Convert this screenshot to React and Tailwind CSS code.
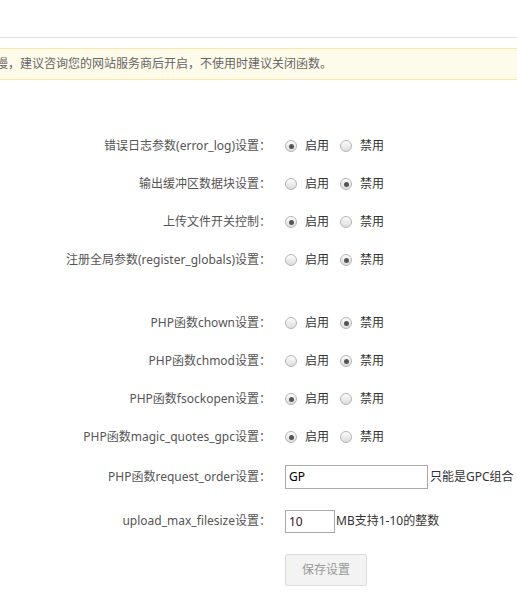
import React, { useState } from "react";

const font = { fontFamily: '"Noto Sans", "Noto Sans CJK SC", sans-serif' };

const radioRows = [
  { label: "错误日志参数(error_log)设置：", value: "on" },
  { label: "输出缓冲区数据块设置：", value: "off" },
  { label: "上传文件开关控制：", value: "on" },
  { label: "注册全局参数(register_globals)设置：", value: "off" },
];

const phpRows = [
  { label: "PHP函数chown设置：", value: "off" },
  { label: "PHP函数chmod设置：", value: "off" },
  { label: "PHP函数fsockopen设置：", value: "on" },
  { label: "PHP函数magic_quotes_gpc设置：", value: "on" },
];

function Radio({ checked, onClick, text }) {
  return (
    <label className="flex items-center cursor-pointer" onClick={onClick}>
      <span className="flex items-center justify-center w-[12px] h-[12px] rounded-full border border-[#b5b5b5] bg-gradient-to-b from-[#fdfdfd] to-[#dcdcdc]">
        {checked && <span className="w-[5px] h-[5px] rounded-full bg-[#555]" />}
      </span>
      <span className="ml-[8px] text-[12px] text-[#333]">{text}</span>
    </label>
  );
}

function Row({ label, children, className = "h-[38px]" }) {
  return (
    <div className={`flex items-center ${className}`}>
      <div className="w-[271px] shrink-0 text-right text-[12px] text-[#555] whitespace-nowrap">{label}</div>
      <div className="pl-[14px] flex items-center">{children}</div>
    </div>
  );
}

function RadioRow({ row }) {
  const [v, setV] = useState(row.value);
  return (
    <Row label={row.label}>
      <Radio checked={v === "on"} onClick={() => setV("on")} text="启用" />
      <div className="w-[11px]" />
      <Radio checked={v === "off"} onClick={() => setV("off")} text="禁用" />
    </Row>
  );
}

export default function App() {
  const [order, setOrder] = useState("GP");
  const [size, setSize] = useState("10");

  return (
    <div className="w-[517px] h-[608px] overflow-hidden bg-white" style={font}>
      <div className="h-[38px] border-b border-[#e3e3e3]" />
      <div className="mt-[10px] h-[32px] flex items-center bg-[#fffbea] border-y border-[#fde5a8] overflow-hidden">
        <div className="ml-[-328px] whitespace-nowrap text-[12px] text-[#666]">
          提示：部分函数开启后可能会造成网站安全隐患或访问速度变慢，建议咨询您的网站服务商后开启，不使用时建议关闭函数。
        </div>
      </div>

      <div className="mt-[47px]">
        {radioRows.map((r) => (
          <RadioRow key={r.label} row={r} />
        ))}
        <div className="h-[25px]" />
        {phpRows.map((r) => (
          <RadioRow key={r.label} row={r} />
        ))}
        <Row label="PHP函数request_order设置：" className="h-[41px]">
          <input
            className="w-[143px] h-[24px] border border-[#a9a9a9] px-[3px] text-[12px] text-[#000] outline-none"
            value={order}
            onChange={(e) => setOrder(e.target.value)}
          />
          <span className="ml-[2px] text-[12px] text-[#333] whitespace-nowrap">只能是GPC组合</span>
        </Row>
        <Row label="upload_max_filesize设置：" className="h-[48px]">
          <input
            className="w-[50px] h-[23px] border border-[#a9a9a9] px-[3px] text-[12px] text-[#3a0a2a] outline-none"
            value={size}
            onChange={(e) => setSize(e.target.value)}
          />
          <span className="ml-[1px] text-[12px] text-[#333] whitespace-nowrap">MB支持1-10的整数</span>
        </Row>
        <div className="pl-[285px] mt-[9px]">
          <button className="w-[82px] h-[32px] rounded-[2px] border border-[#dcdcdc] bg-[#f3f3f3] text-[12px] text-[#999]">
            保存设置
          </button>
        </div>
      </div>
    </div>
  );
}
